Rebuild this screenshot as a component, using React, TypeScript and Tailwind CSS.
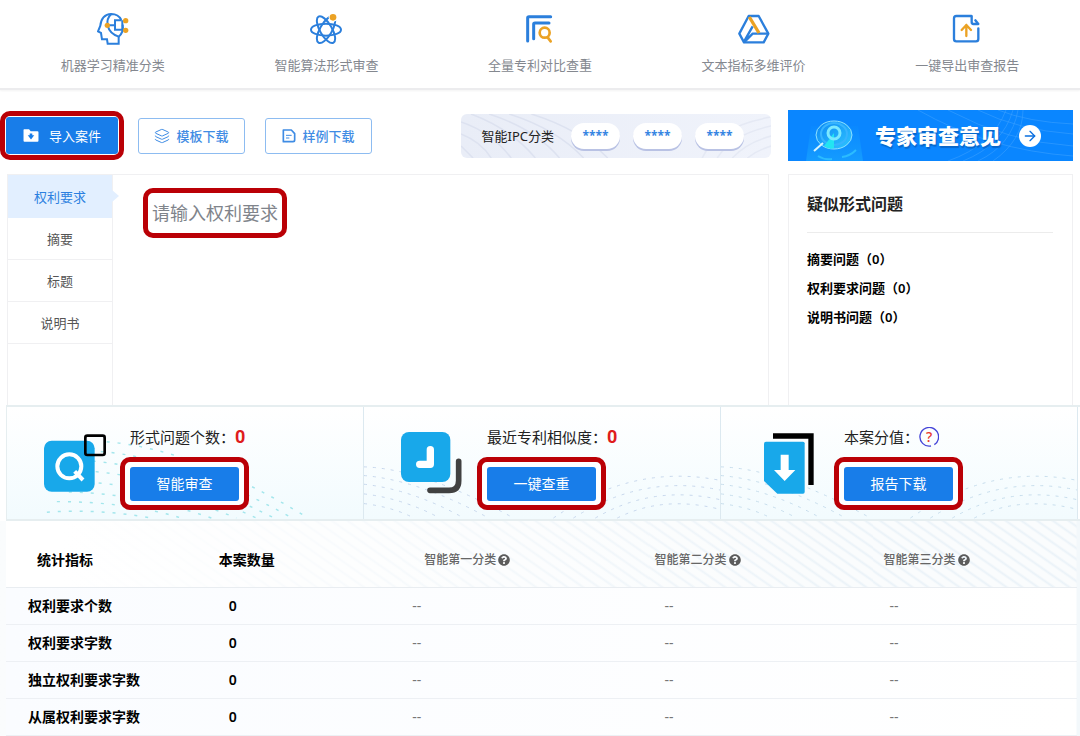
import React from 'react';
import { Layers, ArrowRight } from 'lucide-react';
import { FaQuestionCircle } from 'react-icons/fa';

const BrainIcon = () => (
  <svg viewBox="0 0 96 96" className="size-8" fill="none" stroke="#2b7fdc" strokeWidth="6">
    <path d="M65 70V92H32L30 79H15L12 60L3 55L10 38C12 17 24 4 43 3C57 3 67 9 73 21" />
    <path d="M77 35C80 52 76 62 65 71" />
    <path d="M43 3C24 20 26 58 65 71" />
    <path d="M73 22H54V50H75M76 22V50M54 37H32" />
    <g fill="#eba224" stroke="none">
      <circle cx="31" cy="37" r="8" />
      <circle cx="86" cy="23" r="8" />
      <circle cx="86" cy="52" r="8" />
    </g>
  </svg>
);

const AtomIcon = () => (
  <svg viewBox="0 0 96 96" className="size-8" fill="none" stroke="#2b7fdc" strokeWidth="6">
    <ellipse cx="48" cy="50" rx="45" ry="18" />
    <ellipse cx="48" cy="50" rx="45" ry="18" transform="rotate(60 48 50)" />
    <ellipse cx="48" cy="50" rx="45" ry="18" transform="rotate(120 48 50)" />
    <circle cx="69" cy="13" r="13" fill="#fff" stroke="none" />
    <circle cx="69" cy="13" r="10" fill="#eba224" stroke="none" />
  </svg>
);

const CompareIcon = () => (
  <svg viewBox="0 0 96 96" className="size-8" fill="none" stroke="#2b7fdc" strokeWidth="9" strokeLinecap="round">
    <path d="M11 84V15Q11 11 15 11H80" />
    <path d="M29 77V34Q29 30 33 30H75" />
    <g stroke="#eba224" strokeWidth="8">
      <circle cx="62" cy="59" r="15" />
      <path d="M71 73L80 85" />
    </g>
  </svg>
);

const TriangleIcon = () => (
  <svg viewBox="0 0 96 96" className="size-8" fill="none" stroke="#2b7fdc" strokeWidth="7" strokeLinejoin="round">
    <path d="M32 9H62L91 62L77 88H18L4 62Z" />
    <path d="M91 62H44L18 88M44 40L18 86" />
    <path d="M34 12L63 60" stroke="#eba224" strokeWidth="10" />
  </svg>
);

const ExportIcon = () => (
  <svg viewBox="0 0 96 96" className="size-8" fill="none" stroke="#2b7fdc" strokeWidth="7" strokeLinecap="round" strokeLinejoin="round">
    <path d="M61 9H16Q9 9 9 16V78Q9 85 16 85H75Q82 85 82 78V46" />
    <path d="M62 10V27Q62 33 67 33H82L73 22" />
    <path d="M46 69V36M32 51L46 36L60 51" stroke="#eba224" />
  </svg>
);

const FolderIcon = () => (
  <svg viewBox="0 0 48 40" className="h-[13px] w-4" fill="#fff">
    <path d="M3 1H18L23 7H44Q47 7 47 10V36Q47 39 44 39H4Q1 39 1 36V3Q1 1 3 1Z" />
    <path d="M20 14H28V19H34L24 32L14 19H20Z" fill="#187de9" />
  </svg>
);

const SampleIcon = () => (
  <svg viewBox="0 0 42 42" className="size-3.5" fill="none" stroke="#3f8ce4" strokeWidth="5" strokeLinejoin="round">
    <path d="M4 3H28L38 14V33Q38 38 33 38H4Z" />
    <path d="M12 19H29M12 27H22" strokeWidth="3" />
  </svg>
);

const ReviewIcon = () => (
  <svg viewBox="0 0 186 174" className="h-[58px] w-[62px]" fill="none">
    <rect y="20" width="152" height="153" rx="23" fill="#18a8ea" />
    <circle cx="76" cy="97" r="36" stroke="#fff" strokeWidth="12" />
    <path d="M92 112L117 138" stroke="#fff" strokeWidth="12" />
    <rect x="124" y="5" width="58" height="58" rx="6" stroke="#000" strokeWidth="8" />
  </svg>
);

const SimilarIcon = () => (
  <svg viewBox="0 0 183 186" className="h-[62px] w-[61px]" fill="none" strokeLinecap="round" strokeLinejoin="round">
    <rect width="148" height="150" rx="24" fill="#18a8ea" />
    <path d="M88 53V97H56" stroke="#fff" strokeWidth="22" />
    <path d="M173 88V146Q173 175 144 175H87" stroke="#414141" strokeWidth="17" />
  </svg>
);

const ReportIcon = () => (
  <svg viewBox="0 0 150 183" className="h-[61px] w-[50px]" fill="none">
    <path d="M27 9H141V156" stroke="#000" strokeWidth="16" />
    <path d="M6 26H117Q122 26 122 31V177Q122 182 117 182H40L0 144V32Q0 26 6 26Z" fill="#18a8ea" />
    <path d="M50 65H74V111H94L62 144L30 111H50Z" fill="#fff" />
  </svg>
);

const BannerArt = () => (
  <svg viewBox="0 0 285 51" preserveAspectRatio="none" className="absolute inset-0 size-full" fill="none">
    <defs>
      <linearGradient id="beam" x1="0" y1="0" x2="0" y2="1">
        <stop offset="0" stopColor="#0a8bff" />
        <stop offset="1" stopColor="#21b6ff" />
      </linearGradient>
      <linearGradient id="lens" x1="0" y1="0" x2="1" y2="1">
        <stop offset="0" stopColor="#0b86f4" />
        <stop offset="1" stopColor="#2fc6ff" />
      </linearGradient>
    </defs>
    <path d="M23 16H70L75 51H18Z" fill="url(#beam)" opacity="0.45" />
    <ellipse cx="46" cy="25" rx="18" ry="14" fill="url(#lens)" stroke="#8fe2ff" />
    <ellipse cx="46" cy="24" rx="13" ry="11" stroke="#37b4ff" strokeWidth="2" />
    <path d="M46 23L36 36Q41 40 46 38Z" fill="#22e4f2" />
    <circle cx="46" cy="23" r="6" stroke="#7be8ff" strokeWidth="3" />
    <path d="M35 33L26 41" stroke="#d6f6ff" strokeWidth="2" />
    <path d="M30 46Q36 50 44 49M54 47Q62 46 68 40" stroke="#2bbcff" strokeWidth="2" />
    <g stroke="#5bb2ff" strokeWidth="0.6" opacity="0.6">
      <path d="M130 0Q200 40 285 46M160 0Q220 32 285 36M190 0Q230 20 285 24M210 0Q240 12 285 14" />
      <path d="M225 0Q215 35 175 51M230 0Q224 35 190 51M218 0Q205 35 160 51M235 0Q235 30 205 51" />
    </g>
  </svg>
);

const WaveDots = ({ color }: { color: string }) => (
  <svg viewBox="0 0 357 116" preserveAspectRatio="none" className="absolute inset-0 size-full" fill="none" stroke={color} strokeDasharray="3 6">
    <path d="M0 62Q60 64 150 115" />
    <path d="M0 71Q56 76 125 115" />
    <path d="M0 80Q50 86 100 115" />
    <path d="M0 90Q40 95 76 115" />
    <path d="M0 100Q30 104 50 115" />
    <path d="M190 115Q270 58 357 76" />
    <path d="M210 115Q280 69 357 86" />
    <path d="M232 115Q290 80 357 96" />
    <path d="M254 115Q300 91 357 106" />
  </svg>
);

const RidgeDots = ({ color }: { color: string }) => (
  <svg viewBox="0 0 357 116" preserveAspectRatio="none" className="absolute inset-0 size-full" fill="none" stroke={color} strokeWidth="1.5" strokeDasharray="3 8">
    <path d="M100 36Q190 44 302 115" />
    <path d="M94 46Q180 54 286 115" />
    <path d="M86 56Q170 64 268 115" />
    <path d="M78 66Q160 72 250 115" />
    <path d="M70 77Q150 81 230 115" />
    <path d="M62 88Q135 90 205 115" />
    <path d="M50 98Q120 98 175 115" />
    <path d="M40 109Q90 105 145 115" />
  </svg>
);

const features = [
  { label: '机器学习精准分类', icon: <BrainIcon /> },
  { label: '智能算法形式审查', icon: <AtomIcon /> },
  { label: '全量专利对比查重', icon: <CompareIcon /> },
  { label: '文本指标多维评价', icon: <TriangleIcon /> },
  { label: '一键导出审查报告', icon: <ExportIcon /> },
];

const tabs = ['权利要求', '摘要', '标题', '说明书'];

const issues = ['摘要问题（0）', '权利要求问题（0）', '说明书问题（0）'];

const rows = ['权利要求个数', '权利要求字数', '独立权利要求字数', '从属权利要求字数'];

interface StatCardProps {
  icon: React.ReactNode;
  art: React.ReactNode;
  title: string;
  value: React.ReactNode;
  action: string;
}

const StatCard: React.FC<StatCardProps> = ({ icon, art, title, value, action }) => (
  <div className="relative flex flex-1 border-r border-[#dce9f0] bg-linear-to-b from-white to-[#f2fbfe]">
    {art}
    <div className="relative ml-[22px] flex w-[91px] shrink-0 items-center justify-center">{icon}</div>
    <div className="relative pt-[18px] pb-2.5">
      <div className="flex h-6 items-center pl-2.5 text-[15px] text-[#222]">
        <span>{title}：</span>
        {value}
      </div>
      <div className="mt-2 w-fit rounded-[10px] border-5 border-[#ba0006] bg-white px-1 pt-[5px] pb-1">
        <button type="button" className="mx-px block h-[34px] w-[109px] rounded-[3px] bg-[#187de9] text-sm text-white">
          {action}
        </button>
      </div>
    </div>
  </div>
);

const Zero = () => <span className="font-['Roboto',sans-serif] text-lg font-bold text-[#df1c1c]">0</span>;

const ScoreHelp = () => (
  <button type="button" aria-label="分值说明" className="relative flex size-5 items-center justify-center text-sm font-medium text-[#e8352e]">
    <svg viewBox="0 0 60 60" className="absolute inset-0 size-full" fill="none" stroke="#4545d8" strokeWidth="4">
      <path d="M36 57A28 28 0 1 1 46 53" />
    </svg>
    <span className="relative">?</span>
  </button>
);

const HelpHeading = ({ text }: { text: string }) => (
  <span className="flex items-center gap-0.5 text-xs font-medium text-[#666]">
    {text}
    <FaQuestionCircle className="size-3 text-[#5c5c5c]" />
  </span>
);

export default function App() {
  return (
    <div className="bg-white font-['Noto_Sans','Noto_Sans_CJK_SC',sans-serif] text-[13px] leading-5 text-[#222]">
      <header className="grid h-[90px] grid-cols-5 border-b-2 border-[#ececee] px-1.5 shadow-xs">
        {features.map((feature) => (
          <div key={feature.label} className="flex flex-col items-center gap-2.5 pt-[13px] text-[#84888f]">
            {feature.icon}
            <span>{feature.label}</span>
          </div>
        ))}
      </header>

      <div className="flex items-center pt-5 pr-[7px]">
        <div className="rounded-[10px] border-5 border-[#ba0006] p-px">
          <button type="button" className="flex h-[37px] w-28 items-center justify-center gap-2.5 rounded-[3px] bg-[#187de9] text-white">
            <FolderIcon />
            导入案件
          </button>
        </div>
        <div className="ml-3.5 flex gap-5">
          <button type="button" className="flex h-9 w-[107px] items-center justify-center gap-1.5 rounded-[3px] border border-[#8dbcf1] font-medium text-[#3f8ce4]">
            <Layers className="size-4" strokeWidth={1.5} />
            模板下载
          </button>
          <button type="button" className="flex h-9 w-[107px] items-center justify-center gap-1.5 rounded-[3px] border border-[#8dbcf1] font-medium text-[#3f8ce4]">
            <SampleIcon />
            样例下载
          </button>
        </div>

        <div className="relative ml-auto flex h-11 items-center gap-[13px] overflow-hidden rounded-md bg-linear-to-r from-[#e9edf7] to-[#f0f3fb] pr-[27px] pl-[21px]">
          <svg viewBox="0 0 309 44" preserveAspectRatio="none" className="absolute inset-0 size-full" fill="none" stroke="#dde2f0" strokeWidth="1.5">
            <path d="M0 8Q30 18 50 44M0 20Q20 28 30 44M0 32L12 44M10 0Q50 15 74 44M28 0Q74 15 98 44M48 0Q95 15 122 44M70 0Q118 15 146 44" />
            <path d="M255 44Q270 20 309 12M270 44Q285 28 309 22M285 44Q295 36 309 32M240 44Q255 12 309 3" opacity="0.6" />
          </svg>
          <span className="relative mr-1">智能IPC分类</span>
          {[1, 2, 3].map((n) => (
            <span key={n} className="relative flex h-[26px] w-[49px] items-center justify-center rounded-full bg-white text-xs font-bold text-[#3585e2] shadow-[0_2px_0_#b9c2e4]">
              ****
            </span>
          ))}
        </div>

        <a href="#opinion" className="relative ml-[17px] flex h-[51px] w-[285px] items-center bg-[#0a86ff] pl-[87px]">
          <BannerArt />
          <span className="relative text-[21px] font-black text-white text-shadow-[1px_2px_1px_#0867cc]">专家审查意见</span>
          <span className="relative ml-[18px] flex size-[22px] items-center justify-center rounded-full bg-white">
            <ArrowRight className="size-4 text-[#0a6fe0]" strokeWidth={2} />
          </span>
        </a>
      </div>

      <main className="mt-[13px] flex h-[231px] gap-[19px] px-[7px]">
        <section className="flex flex-1 border border-b-0 border-[#f0f0f2]">
          <nav className="flex w-[105px] flex-col border-r border-[#f0f0f2]">
            {tabs.map((tab, index) => (
              <button
                key={tab}
                type="button"
                className={
                  index === 0
                    ? 'relative h-[43px] bg-[#e2efff] text-[#2c7fe0]'
                    : 'h-[42px] border-b border-[#f0f0f2] text-[#555]'
                }
              >
                {tab}
                {index === 0 && (
                  <span className="absolute top-[15px] left-full border-y-6 border-l-7 border-y-transparent border-l-[#e2efff]" />
                )}
              </button>
            ))}
          </nav>
          <div className="p-[30px] pt-[13px]">
            <textarea
              aria-label="权利要求"
              placeholder="请输入权利要求"
              className="block h-[50px] w-36 resize-none overflow-hidden rounded-[10px] border-5 border-[#ba0006] py-1.5 pl-1 text-lg leading-7 outline-none placeholder:text-[#80848b]"
            />
          </div>
        </section>

        <aside className="w-[285px] border border-b-0 border-[#f0f0f2] px-[18px]">
          <h2 className="mr-px border-b border-[#ececec] pt-[17px] pb-4 text-base leading-6 font-bold">疑似形式问题</h2>
          <ul className="mt-4 flex flex-col gap-[9px] font-semibold text-black">
            {issues.map((issue) => (
              <li key={issue}>{issue}</li>
            ))}
          </ul>
        </aside>
      </main>

      <section className="ml-1.5 flex h-[116px] border-y-2 border-l border-[#e6eef0] pr-0.5">
        <StatCard icon={<ReviewIcon />} art={<RidgeDots color="#a4e6ec" />} title="形式问题个数" value={<Zero />} action="智能审查" />
        <StatCard icon={<SimilarIcon />} art={<WaveDots color="#c6d6ec" />} title="最近专利相似度" value={<Zero />} action="一键查重" />
        <StatCard icon={<ReportIcon />} art={<WaveDots color="#c6dcec" />} title="本案分值" value={<ScoreHelp />} action="报告下载" />
      </section>

      <div className="bg-linear-to-r from-[#fafcfd] to-[#f3f8fb] pr-[3px] pl-1.5">
        <table className="w-full table-fixed border-collapse text-left text-sm">
          <colgroup>
            <col className="w-[18%]" />
            <col className="w-[19%]" />
            <col className="w-[23%]" />
            <col className="w-[21%]" />
            <col className="w-[19%]" />
          </colgroup>
          <thead className="bg-[linear-gradient(to_right,white_5%,transparent_80%),repeating-linear-gradient(35deg,#fafcfd_0px,#fafcfd_5px,#eaf2f8_7px,#fafcfd_9px)]">
            <tr className="h-[66px] border-b border-[#e9edf1]">
              <th className="pt-3 pl-[31px] font-bold text-black">统计指标</th>
              <th className="pt-3 pl-5 font-bold text-black">本案数量</th>
              <th className="pt-3 pl-[22px]"><HelpHeading text="智能第一分类" /></th>
              <th className="pt-3 pl-1.5"><HelpHeading text="智能第二分类" /></th>
              <th className="pt-3 pl-2.5"><HelpHeading text="智能第三分类" /></th>
            </tr>
          </thead>
          <tbody className="bg-linear-to-r from-[#fafcff] to-white">
            {rows.map((row) => (
              <tr key={row} className="h-[37px] border-b border-[#edf0f4]">
                <th scope="row" className="pl-[22px] font-semibold text-black">{row}</th>
                <td className="pl-[30px] font-semibold text-black">0</td>
                <td className="pl-2.5 text-[#777]">--</td>
                <td className="pl-4 text-[#777]">--</td>
                <td className="pl-4 text-[#777]">--</td>
              </tr>
            ))}
          </tbody>
        </table>
      </div>
    </div>
  );
}
